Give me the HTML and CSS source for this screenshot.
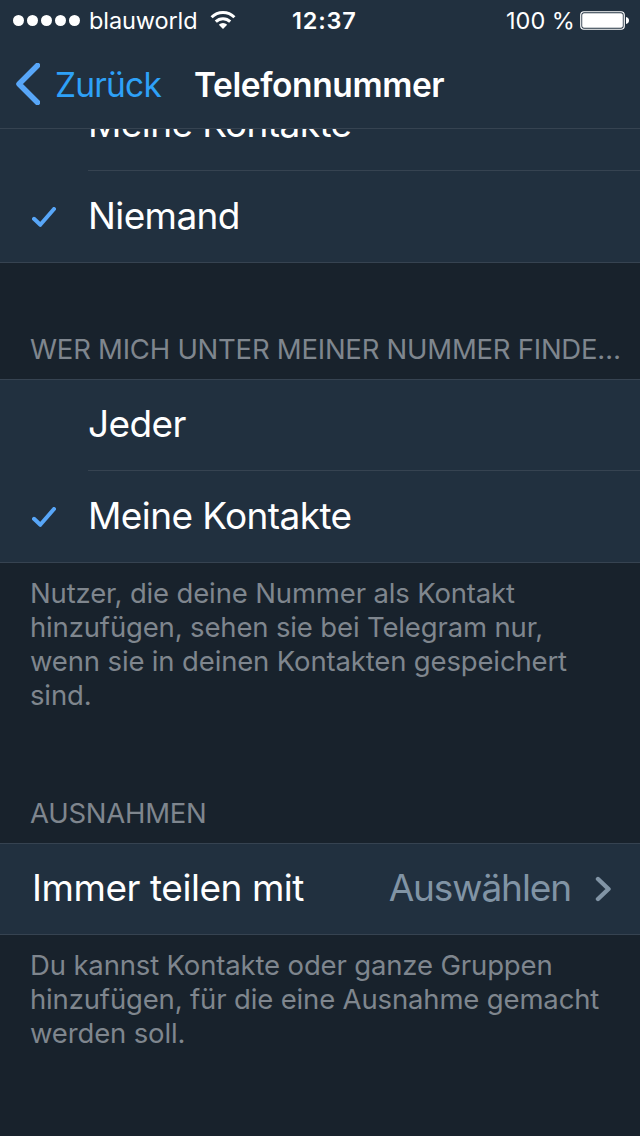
FILE: index.html
```html
<!DOCTYPE html>
<html lang="de">
<head>
    <meta charset="UTF-8">
    <title>Telefonnummer</title>
    <link rel="stylesheet" href="styles.css">
</head>

<body>
    <header>
        <div class="statusbar">
            <div class="signal">
                <i></i><i></i><i></i><i></i><i></i>
            </div>
            <span class="carrier">blauworld</span>
            <svg class="wifi" viewBox="0 0 26 20">
                <g fill="none" stroke="#fff" stroke-width="3">
                    <path d="M1.6 7.3a16.2 16.2 0 0 1 22.8 0" />
                    <path d="M5.8 11.6a10.3 10.3 0 0 1 14.4 0" />
                </g>
                <path fill="#fff" d="M8.8 14.7a6 6 0 0 1 8.4 0L13 19z" />
            </svg>
            <span class="clock">12:37</span>
            <span class="percent">100 %</span>
            <svg class="battery" viewBox="0 0 49 19">
                <rect x=".75" y=".75" width="43.5" height="17.5" rx="3.2" fill="none" stroke="#fff" stroke-width="1.2" />
                <rect x="2.2" y="2.2" width="40.6" height="14.6" rx="1.8" fill="#fff" />
                <path fill="#fff" d="M46 6c2 .3 3 1.6 3 3.5s-1 3.2-3 3.5z" />
            </svg>
        </div>
        <nav>
            <svg class="back-icon" viewBox="0 0 24 42">
                <path d="M21.5 2.5L3 21 21.5 39.5" />
            </svg>
            <a class="back">Zurück</a>
            <h1>Telefonnummer</h1>
        </nav>
    </header>

    <main>
        <ul class="first">
            <li><span class="check"></span><span class="label">Meine Kontakte</span></li>
            <li>
                <span class="check"><svg viewBox="0 0 24 20"><path d="M2 11.8L8.3 17.8 22 2" /></svg></span>
                <span class="label">Niemand</span>
            </li>
        </ul>

        <h2>WER MICH UNTER MEINER NUMMER FINDEN KANN</h2>
        <ul>
            <li><span class="check"></span><span class="label">Jeder</span></li>
            <li>
                <span class="check"><svg viewBox="0 0 24 20"><path d="M2 11.8L8.3 17.8 22 2" /></svg></span>
                <span class="label">Meine Kontakte</span>
            </li>
        </ul>
        <p>Nutzer, die deine Nummer als Kontakt<br>hinzufügen, sehen sie bei Telegram nur,<br>wenn sie in deinen Kontakten gespeichert<br>sind.</p>

        <h2 class="ausnahmen">AUSNAHMEN</h2>
        <ul>
            <li class="link">
                <span class="immer">Immer teilen mit</span>
                <span class="value">Auswählen</span>
                <svg class="arrow" viewBox="0 0 16 26"><path d="M3 3L13.5 13 3 23" /></svg>
            </li>
        </ul>
        <p>Du kannst Kontakte oder ganze Gruppen<br>hinzufügen, für die eine Ausnahme gemacht<br>werden soll.</p>
    </main>
</body></html>
```

FILE: styles.css
```css
* {
    box-sizing: border-box;
}

body {
    margin: 0;
    height: 1136px;
    display: flex;
    flex-direction: column;
    overflow: hidden;
    background-color: #18222c;
    color: #fff;
    font-family: Inter, sans-serif;
    white-space: nowrap;
}

svg {
    display: block;
    flex: none;
}

header {
    flex: none;
    height: 129px;
    background-color: #21303f;
    border-bottom: 1px solid #364351;
}

.statusbar {
    display: flex;
    align-items: center;
    height: 40px;
    padding-left: 13px;
    font-size: 23.5px;
    line-height: 38px;
}

.statusbar span {
    padding-top: 2px;
}

.signal {
    display: flex;
    gap: 3px;
    width: 76px;
}

.signal i {
    width: 11px;
    height: 11px;
    border-radius: 50%;
    background-color: #fff;
}

.carrier {
    width: 121px;
    letter-spacing: -0.1px;
}

.wifi {
    width: 26px;
    height: 20px;
}

.clock {
    margin-left: 56px;
    width: 214px;
    font-weight: 600;
    letter-spacing: 0.8px;
}

.percent {
    width: 74px;
}

.battery {
    width: 49px;
    height: 19px;
}

nav {
    display: flex;
    align-items: center;
    height: 88px;
    padding-left: 16px;
}

.back-icon {
    width: 24px;
    height: 42px;
}

.back-icon path {
    fill: none;
    stroke: #58a6f8;
    stroke-width: 5.5;
    stroke-linecap: round;
    stroke-linejoin: round;
}

.back {
    margin-left: 15px;
    padding-top: 1px;
    width: 139px;
    font-size: 33.5px;
    letter-spacing: -0.8px;
    color: #2ea1f8;
}

h1 {
    margin: 0;
    padding-top: 1px;
    font-size: 33.5px;
    font-weight: 600;
    letter-spacing: -0.4px;
}

/* the list is scrolled a bit, so the top row is cut by the header */
main {
    flex: 1;
    min-height: 0;
    overflow: hidden;
}

ul {
    margin: 0;
    padding: 0;
    list-style: none;
    background-color: #21303f;
    border-top: 1px solid #364351;
    border-bottom: 1px solid #364351;
}

.first {
    margin-top: -50px;
}

li {
    display: flex;
    align-items: center;
    height: 91px;
    font-size: 37px;
    letter-spacing: -0.6px;
}

.check {
    width: 88px;
    padding-left: 32px;
}

.check svg {
    width: 24px;
    height: 20px;
}

.check path {
    fill: none;
    stroke: #58a6f8;
    stroke-width: 4;
    stroke-linecap: round;
    stroke-linejoin: round;
}

.label {
    flex: 1;
    height: 91px;
    line-height: 89px;
}

li:first-child .label {
    border-bottom: 1px solid #364351;
    line-height: 87px;
}

.link {
    height: 90px;
    padding: 0 29px 0 32px;
    line-height: 87px;
}

.link span {
    height: 90px;
}

.immer {
    letter-spacing: -0.45px;
}

.value {
    margin-left: auto;
    letter-spacing: -1.1px;
    color: #8194a5;
}

.arrow {
    margin-left: 24px;
    width: 16px;
    height: 26px;
}

.arrow path {
    fill: none;
    stroke: #8194a5;
    stroke-width: 4.4;
    stroke-linecap: round;
    stroke-linejoin: round;
}

h2 {
    margin: 69px 0 0;
    padding: 0 15px 13px 30px;
    overflow: hidden;
    text-overflow: ellipsis;
    font-size: 27.5px;
    font-weight: 400;
    line-height: 34px;
    letter-spacing: -0.24px;
    color: #7f868e;
}

.ausnahmen {
    margin-top: 84px;
}

p {
    margin: 0;
    padding: 13px 30px 0;
    font-size: 27.5px;
    line-height: 34px;
    letter-spacing: -0.15px;
    color: #7f868e;
}
```
